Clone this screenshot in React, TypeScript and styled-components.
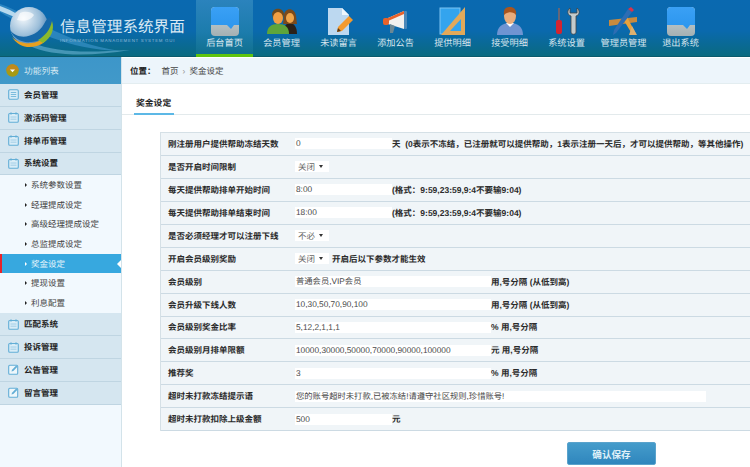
import React from 'react'
import styled, { createGlobalStyle } from 'styled-components'

const GlobalStyle = createGlobalStyle`
  html, body {
    margin: 0;
    padding: 0;
    height: 100%;
    overflow: hidden;
    background: #fff;
    font-family: 'Liberation Sans', 'Noto Sans CJK SC', sans-serif;
    font-size: 8.5px;
    color: #333;
    text-rendering: geometricPrecision;
  }
  * {
    box-sizing: border-box;
  }
`

const Page = styled.div`
  width: 750px;
  height: 467px;
  display: flex;
  flex-direction: column;
  overflow: hidden;
`

const Header = styled.header`
  height: 57px;
  flex: none;
  display: flex;
  background: linear-gradient(180deg, #0a69b0 0%, #0a69ad 55%, #0a6a80 100%);
  border-bottom: 1px solid #0c5a6c;
`

const Brand = styled.div`
  position: relative;
  width: 196px;
  flex: none;
  overflow: hidden;
`

const BrandArt = styled.svg`
  position: absolute;
  left: 0;
  top: 0;
`

const BrandText = styled.div`
  position: absolute;
  left: 60px;
  top: 19px;
`

const BrandTitle = styled.div`
  font-size: 15.6px;
  line-height: 18px;
  color: #dbeaf4;
  white-space: nowrap;
`

const BrandSub = styled.div`
  font-size: 4.4px;
  line-height: 6px;
  margin-top: 1px;
  letter-spacing: 0.72px;
  color: #8fb9d6;
  white-space: nowrap;
`

const Nav = styled.nav`
  display: flex;
`

const NavItem = styled.div<{ $active?: boolean }>`
  width: 57px;
  display: flex;
  flex-direction: column;
  align-items: center;
  padding-top: 6px;
  color: #d7e6ee;
  font-size: 9.2px;
  line-height: 12px;
  white-space: nowrap;
  ${p =>
    p.$active &&
    `
    background: linear-gradient(180deg, #2b83bd 0%, #1c7cac 60%, #10708f 100%);
    border-bottom: 3px solid #5fc40e;
    margin-bottom: -1px;
  `}
`

const NavIconBox = styled.svg`
  width: 32px;
  height: 31px;
  flex: none;
`

const Body = styled.div`
  flex: 1;
  display: flex;
  min-height: 0;
`

const Sidebar = styled.aside`
  width: 122px;
  flex: none;
  background: #f2f9fe;
  border-right: 1px solid #d3e3ea;
`

const SidebarHead = styled.div`
  height: 27px;
  display: flex;
  align-items: center;
  gap: 5px;
  padding-left: 6px;
  color: #d6e8f2;
  font-size: 8.7px;
  background: linear-gradient(180deg, #3d96c9, #4199c9);
`

const HeadDot = styled.svg`
  width: 13px;
  height: 13px;
  flex: none;
`

const MenuRow = styled.div`
  height: 22.85px;
  display: flex;
  align-items: center;
  gap: 5px;
  padding-left: 8px;
  background: #d5e6f0;
  border-bottom: 1px solid #bfd5e2;
  color: #222;
  font-size: 8.5px;
  font-weight: 700;
`

const MenuIcon = styled.svg`
  width: 11px;
  height: 11px;
  flex: none;
`

const SubList = styled.div`
  height: 138px;
`

const SubRow = styled.div<{ $active?: boolean }>`
  position: relative;
  height: 19.6px;
  display: flex;
  align-items: center;
  gap: 4px;
  font-size: 8.5px;
  color: ${p => (p.$active ? '#e8f5fb' : '#444')};
  background: ${p => (p.$active ? '#37a8df' : 'transparent')};
  border-left: ${p => (p.$active ? '2px solid #e8232a' : '0')};
  padding-left: ${p => (p.$active ? '23px' : '25px')};

  &::before {
    content: '';
    border-left: 2.5px solid ${p => (p.$active ? '#fff' : '#222')};
    border-top: 2.5px solid transparent;
    border-bottom: 2.5px solid transparent;
  }

  ${p =>
    p.$active &&
    `
    &::after {
      content: '';
      position: absolute;
      right: 0;
      top: 6px;
      border-right: 4px solid #fff;
      border-top: 4px solid transparent;
      border-bottom: 4px solid transparent;
    }
  `}
`

const Main = styled.main`
  flex: 1;
  min-width: 0;
  display: flex;
  flex-direction: column;
`

const Crumbs = styled.div`
  height: 26px;
  margin-top: 1px;
  display: flex;
  align-items: center;
  gap: 5px;
  padding-left: 8px;
  background: #edf5fb;
  border-bottom: 1px solid #e3edf0;
  font-size: 8.5px;
  color: #444;
`

const CrumbLabel = styled.span`
  font-weight: 700;
  color: #222;
  margin-right: 1px;
`

const CrumbSep = styled.span`
  color: #999;
  margin: 0 -1px;
`

const TabBar = styled.div`
  height: 31px;
  padding-left: 12px;
  display: flex;
  align-items: flex-end;
  border-bottom: 1px solid #e3eaec;
`

const TabTitle = styled.div`
  width: 40px;
  height: 19px;
  margin-bottom: -1px;
  padding-left: 2px;
  font-size: 8.8px;
  font-weight: 700;
  color: #222;
  border-bottom: 2px solid #5cb8e6;
`

const Form = styled.div`
  margin: 17px 0 0 38px;
  border-top: 1px solid #d5e0e6;
  border-left: 1px solid #d5e0e6;
`

const Row = styled.div`
  height: 22.95px;
  display: flex;
  align-items: center;
  background: #f0f5f8;
  border-bottom: 1.5px solid #ccdae3;
  white-space: nowrap;
`

const Label = styled.div`
  width: 134px;
  padding-left: 7px;
  flex: none;
  font-weight: 700;
  color: #2a2a2a;
`

const Field = styled.div<{ $width: number }>`
  width: ${p => p.$width}px;
  height: 11px;
  flex: none;
  padding-left: 1px;
  background: #fff;
  color: #484848;
  font-size: 8.3px;
  line-height: 11px;
  overflow: hidden;
`

const Select = styled.div`
  width: 34px;
  height: 11px;
  flex: none;
  display: flex;
  align-items: center;
  justify-content: space-between;
  padding: 0 6px 0 3px;
  background: #fff;
  color: #666;
`

const Caret = styled.span`
  border-top: 3px solid #333;
  border-left: 2px solid transparent;
  border-right: 2px solid transparent;
`

const Note = styled.div`
  font-weight: 700;
  color: #2a2a2a;
`

const SelectNote = styled(Note)`
  margin-left: 3px;
`

const Actions = styled.div`
  display: flex;
  margin: 11px 0 0 445px;
`

const SaveButton = styled.button`
  width: 89px;
  height: 23px;
  padding: 0;
  border: 1px solid #5aa3cc;
  border-radius: 2px;
  background: linear-gradient(180deg, #459ccb, #2f86bd);
  color: #dff0f8;
  font: 700 9.6px 'Liberation Sans', 'Noto Sans CJK SC', sans-serif;
`

function Logo() {
  return (
    <BrandArt width='196' height='57' viewBox='0 0 196 57'>
      <defs>
        <radialGradient id='globe' cx='0.35' cy='0.3' r='0.8'>
          <stop offset='0' stopColor='#f2f7fb' />
          <stop offset='0.55' stopColor='#9dbfda' />
          <stop offset='1' stopColor='#2d6ea8' />
        </radialGradient>
      </defs>
      <path d='M0 4 C30 14 60 42 120 51 C70 50 30 30 0 12Z' fill='#3f97cf' opacity='0.6' />
      <path d='M0 6 C14 11 24 18 36 26 C22 20 10 15 0 11Z' fill='#cfe8f6' opacity='0.85' />
      <path d='M30 42 C60 54 90 52 130 50 C90 57 50 56 30 46Z' fill='#7fc1e4' opacity='0.5' />
      <circle cx='29' cy='26' r='19' fill='url(#globe)' />
      <path d='M10 30 C18 41 36 38 44 24 C47 18 50 15 52 21 C54 32 44 41 31 42 C21 43 13 38 10 30Z' fill='#1668a8' />
      <path d='M12 37 C22 47 42 45 51 31 C49 42 38 48 27 47 C20 46 15 42 12 37Z' fill='#e8a020' />
      <path d='M38 40 C45 36 50 30 52 21 C55 30 51 38 43 43Z' fill='#8ab92c' />
      <path d='M20 13 C24 11 31 11 34 15 C31 20 24 22 17 20Z' fill='#ffffff' opacity='0.65' />
    </BrandArt>
  )
}

function Panel() {
  return (
    <>
      <defs>
        <linearGradient id='panelTop' x1='0' y1='0' x2='0' y2='1'>
          <stop offset='0' stopColor='#3aa0f5' />
          <stop offset='1' stopColor='#2b96ee' />
        </linearGradient>
        <linearGradient id='panelBottom' x1='0' y1='0' x2='0' y2='1'>
          <stop offset='0' stopColor='#cfd8da' />
          <stop offset='1' stopColor='#a4b0b3' />
        </linearGradient>
      </defs>
      <rect x='2' y='1' width='28' height='29' rx='4' fill='url(#panelBottom)' />
      <path d='M2 5a4 4 0 0 1 4-4h20a4 4 0 0 1 4 4v14h-5l-3 4-4-4H2Z' fill='url(#panelTop)' />
    </>
  )
}

function People() {
  return (
    <>
      <path d='M17 28c0-7 3-11 7-11s7 4 7 11Z' fill='#2b2118' />
      <path d='M18 10c0-9 11-9 12 0l1 8h-14Z' fill='#7a4a1c' />
      <ellipse cx='24' cy='12' rx='4' ry='5' fill='#eea54b' />
      <path d='M6 8c1-7 11-7 12 0l-1 5H7Z' fill='#6f4a1c' />
      <ellipse cx='12' cy='12' rx='5' ry='6' fill='#f0a044' />
      <path d='M1 28c0-7 4-10 11-10s11 3 11 10Z' fill='#5ea53a' />
    </>
  )
}

function Memo() {
  return (
    <>
      <path d='M5 2h14l7 7v20H5Z' fill='#bcd8f0' />
      <path d='M19 2l7 7h-7Z' fill='#eef6fc' />
      <path d='M14 26l1-5 11-11 4 4-11 11Z' fill='#f39a2e' />
      <path d='M14 26l1-4 3 3Z' fill='#5a3a1a' />
    </>
  )
}

function Megaphone() {
  return (
    <>
      <path d='M8 12l16-7v18L8 18Z' fill='#f1f1ef' />
      <rect x='3' y='12' width='6' height='7' rx='2' fill='#e8622a' />
      <path d='M8 12l16-7v3L8 15Z' fill='#e8622a' />
      <rect x='24' y='5' width='3' height='18' rx='1' fill='#4b88b8' />
      <path d='M10 18l5 2-2 7h-3Z' fill='#6a8794' />
    </>
  )
}

function Rulers() {
  return (
    <>
      <rect x='3' y='2' width='20' height='26' fill='#33a4ee' stroke='#7cc4f2' />
      <path d='M28 1v28H4Z' fill='#e2a95a' />
      <path d='M24 13v12H13Z' fill='#33a4ee' />
    </>
  )
}

function Person() {
  return (
    <>
      <path d='M3 29c0-8 5-12 13-12s13 4 13 12Z' fill='#6f94d2' />
      <path d='M12 17l4 4 4-4Z' fill='#fff' />
      <ellipse cx='16' cy='10' rx='6' ry='8' fill='#e8ac7c' />
      <path d='M10 9c-1-7 3-8 6-8s7 2 6 8c-2-3-8-4-12 0Z' fill='#a8551e' />
    </>
  )
}

function Tools() {
  return (
    <>
      <rect x='7' y='2' width='2' height='12' fill='#667' />
      <rect x='5' y='14' width='6' height='14' rx='2' fill='#d32430' />
      <path d='M19 2c-3 2-3 7 1 8v16c0 3 5 3 5 0V10c4-1 4-6 1-8v5h-7Z' fill='#c4cbcc' stroke='#444' strokeWidth='0.8' />
    </>
  )
}

function Drafting() {
  return (
    <>
      <path d='M1 14l28-3v5L1 20Z' fill='#c88a3e' />
      <path d='M18 9l10 19h-4l-9-15Z' fill='#e8a23c' />
      <path d='M24 6L8 27l-3 2 1-5L20 3Z' fill='#2d6db3' />
      <path d='M20 3l4 3 2-2-3-3Z' fill='#d8334a' />
      <path d='M24 20l5 9h-8Z' fill='#dcb070' />
    </>
  )
}

const navItems: Array<{ label: string; icon: React.ReactNode; active?: boolean }> = [
  { label: '后台首页', icon: <Panel />, active: true },
  { label: '会员管理', icon: <People /> },
  { label: '未读留言', icon: <Memo /> },
  { label: '添加公告', icon: <Megaphone /> },
  { label: '提供明细', icon: <Rulers /> },
  { label: '接受明细', icon: <Person /> },
  { label: '系统设置', icon: <Tools /> },
  { label: '管理员管理', icon: <Drafting /> },
  { label: '退出系统', icon: <Panel /> },
]

function ListIcon() {
  return (
    <MenuIcon viewBox='0 0 11 11'>
      <rect x='0.7' y='0.7' width='9.6' height='9.6' rx='1.2' fill='#d9edf7' stroke='#63aed6' strokeWidth='1.1' />
      <path d='M2.8 3.5h5.4M2.8 5.5h5.4M2.8 7.5h5.4' stroke='#63aed6' strokeWidth='0.8' />
    </MenuIcon>
  )
}

function CalendarIcon() {
  return (
    <MenuIcon viewBox='0 0 11 11'>
      <rect x='0.7' y='1.5' width='9.6' height='8.8' rx='1' fill='#d9edf7' stroke='#63aed6' strokeWidth='1.1' />
      <path d='M3 0.3v2.4M8 0.3v2.4' stroke='#63aed6' />
      <path d='M2.5 5h6M2.5 7.2h6' stroke='#9ccbe4' strokeWidth='0.9' />
    </MenuIcon>
  )
}

function EditIcon() {
  return (
    <MenuIcon viewBox='0 0 11 11'>
      <rect x='0.7' y='1.2' width='9' height='9' rx='1' fill='#eef7fb' stroke='#63aed6' strokeWidth='1.1' />
      <path d='M3.5 7.5l0.5-1.8L8.2 1.5l1.3 1.3-4.2 4.2Z' fill='#63aed6' />
    </MenuIcon>
  )
}

const subItems = ['系统参数设置', '经理提成设定', '高级经理提成设定', '总监提成设定', '奖金设定', '提现设置', '利息配置']

export default function App() {
  return (
    <Page>
      <GlobalStyle />
      <Header>
        <Brand>
          <Logo />
          <BrandText>
            <BrandTitle>信息管理系统界面</BrandTitle>
            <BrandSub>INFORMATION MANAGEMENT SYSTEM GUI</BrandSub>
          </BrandText>
        </Brand>
        <Nav>
          {navItems.map(item => (
            <NavItem key={item.label} $active={item.active}>
              <NavIconBox viewBox='0 0 32 31'>{item.icon}</NavIconBox>
              {item.label}
            </NavItem>
          ))}
        </Nav>
      </Header>
      <Body>
        <Sidebar>
          <SidebarHead>
            <HeadDot viewBox='0 0 13 13'>
              <circle cx='6.5' cy='6.5' r='6.2' fill='#a79a14' />
              <path d='M0.3 6.5a6.2 6.2 0 0 1 12.4 0Z' fill='#c08a1c' />
              <path d='M4 5.5h5L6.5 8.2Z' fill='#fff' />
            </HeadDot>
            功能列表
          </SidebarHead>
          <MenuRow>
            <ListIcon />
            会员管理
          </MenuRow>
          <MenuRow>
            <CalendarIcon />
            激活码管理
          </MenuRow>
          <MenuRow>
            <CalendarIcon />
            排单币管理
          </MenuRow>
          <MenuRow>
            <CalendarIcon />
            系统设置
          </MenuRow>
          <SubList>
            {subItems.map(s => (
              <SubRow key={s} $active={s === '奖金设定'}>
                {s}
              </SubRow>
            ))}
          </SubList>
          <MenuRow>
            <CalendarIcon />
            匹配系统
          </MenuRow>
          <MenuRow>
            <CalendarIcon />
            投诉管理
          </MenuRow>
          <MenuRow>
            <EditIcon />
            公告管理
          </MenuRow>
          <MenuRow>
            <EditIcon />
            留言管理
          </MenuRow>
        </Sidebar>
        <Main>
          <Crumbs>
            <CrumbLabel>位置：</CrumbLabel>
            <span>首页</span>
            <CrumbSep>›</CrumbSep>
            <span>奖金设定</span>
          </Crumbs>
          <TabBar>
            <TabTitle>奖金设定</TabTitle>
          </TabBar>
          <Form>
            <Row>
              <Label>刚注册用户提供帮助冻结天数</Label>
              <Field $width={97}>0</Field>
              <Note>天&nbsp; (0表示不冻结，已注册就可以提供帮助，1表示注册一天后，才可以提供帮助，等其他操作)</Note>
            </Row>
            <Row>
              <Label>是否开启时间限制</Label>
              <Select>
                关闭
                <Caret />
              </Select>
            </Row>
            <Row>
              <Label>每天提供帮助排单开始时间</Label>
              <Field $width={97}>8:00</Field>
              <Note>(格式：9:59,23:59,9:4不要输9:04)</Note>
            </Row>
            <Row>
              <Label>每天提供帮助排单结束时间</Label>
              <Field $width={97}>18:00</Field>
              <Note>(格式：9:59,23:59,9:4不要输9:04)</Note>
            </Row>
            <Row>
              <Label>是否必须经理才可以注册下线</Label>
              <Select>
                不必
                <Caret />
              </Select>
            </Row>
            <Row>
              <Label>开启会员级别奖励</Label>
              <Select>
                关闭
                <Caret />
              </Select>
              <SelectNote>开启后以下参数才能生效</SelectNote>
            </Row>
            <Row>
              <Label>会员级别</Label>
              <Field $width={196}>普通会员,VIP会员</Field>
              <Note>用,号分隔 (从低到高)</Note>
            </Row>
            <Row>
              <Label>会员升级下线人数</Label>
              <Field $width={196}>10,30,50,70,90,100</Field>
              <Note>用,号分隔 (从低到高)</Note>
            </Row>
            <Row>
              <Label>会员级别奖金比率</Label>
              <Field $width={196}>5,12,2,1,1,1</Field>
              <Note>% 用,号分隔</Note>
            </Row>
            <Row>
              <Label>会员级别月排单限额</Label>
              <Field $width={196}>10000,30000,50000,70000,90000,100000</Field>
              <Note>元 用,号分隔</Note>
            </Row>
            <Row>
              <Label>推荐奖</Label>
              <Field $width={196}>3</Field>
              <Note>% 用,号分隔</Note>
            </Row>
            <Row>
              <Label>超时未打款冻结提示语</Label>
              <Field $width={411}>您的账号超时未打款,已被冻结!请遵守社区规则,珍惜账号!</Field>
            </Row>
            <Row>
              <Label>超时未打款扣除上级金额</Label>
              <Field $width={97}>500</Field>
              <Note>元</Note>
            </Row>
          </Form>
          <Actions>
            <SaveButton>确认保存</SaveButton>
          </Actions>
        </Main>
      </Body>
    </Page>
  )
}
